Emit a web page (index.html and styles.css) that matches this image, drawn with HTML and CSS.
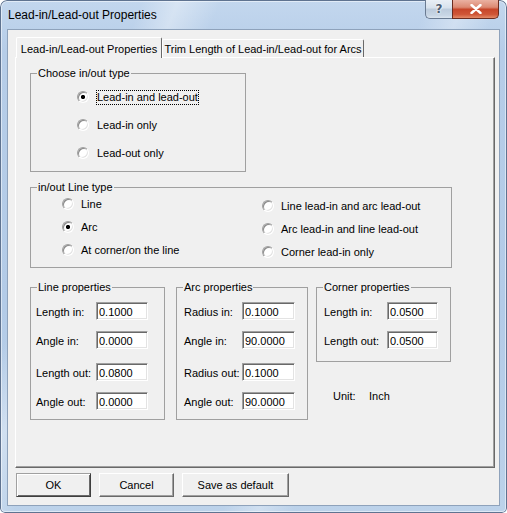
FILE: index.html
```html
<!DOCTYPE html>
<html>
<head>
<meta charset="utf-8">
<title>Lead-in/Lead-out Properties</title>
<link rel="stylesheet" href="styles.css">
</head>
<body>
<div class="window">
  <div class="titlebar">
    <span class="title">Lead-in/Lead-out Properties</span>
    <div class="caption-btns">
      <div class="cap-help">?</div>
      <div class="cap-close">
        <svg width="12" height="10" viewBox="0 0 12 10"><path d="M1.5 1 L10.5 9 M10.5 1 L1.5 9" stroke="#fff" stroke-width="2.4" stroke-linecap="round"/></svg>
      </div>
    </div>
  </div>
  <div class="client">
    <div class="tabs">
      <div class="tab active">Lead-in/Lead-out Properties</div>
      <div class="tab second">Trim Length of Lead-in/Lead-out for Arcs</div>
    </div>
    <div class="panel">
      <fieldset class="group g-type">
        <legend>Choose in/out type</legend>
        <div class="radio-list">
          <label class="radio"><span class="rb checked"></span><span class="rt focus">Lead-in and lead-out</span></label>
          <label class="radio"><span class="rb"></span><span class="rt">Lead-in only</span></label>
          <label class="radio"><span class="rb"></span><span class="rt">Lead-out only</span></label>
        </div>
      </fieldset>
      <fieldset class="group g-line">
        <legend>in/out Line type</legend>
        <div class="cols">
          <div class="col c1">
            <label class="radio"><span class="rb"></span><span class="rt">Line</span></label>
            <label class="radio"><span class="rb checked"></span><span class="rt">Arc</span></label>
            <label class="radio"><span class="rb"></span><span class="rt">At corner/on the line</span></label>
          </div>
          <div class="col c2">
            <label class="radio"><span class="rb"></span><span class="rt">Line lead-in and arc lead-out</span></label>
            <label class="radio"><span class="rb"></span><span class="rt">Arc lead-in and line lead-out</span></label>
            <label class="radio"><span class="rb"></span><span class="rt">Corner lead-in only</span></label>
          </div>
        </div>
      </fieldset>
      <div class="props">
        <fieldset class="group pg line-props">
          <legend>Line properties</legend>
          <div class="prow"><span class="pl">Length in:</span><input class="edit" type="text" value="0.1000"></div>
          <div class="prow"><span class="pl">Angle in:</span><input class="edit" type="text" value="0.0000"></div>
          <div class="prow wide"><span class="pl">Length out:</span><input class="edit" type="text" value="0.0800"></div>
          <div class="prow"><span class="pl">Angle out:</span><input class="edit" type="text" value="0.0000"></div>
        </fieldset>
        <fieldset class="group pg arc-props">
          <legend>Arc properties</legend>
          <div class="prow"><span class="pl">Radius in:</span><input class="edit" type="text" value="0.1000"></div>
          <div class="prow"><span class="pl">Angle in:</span><input class="edit" type="text" value="90.0000"></div>
          <div class="prow wide"><span class="pl">Radius out:</span><input class="edit" type="text" value="0.1000"></div>
          <div class="prow"><span class="pl">Angle out:</span><input class="edit" type="text" value="90.0000"></div>
        </fieldset>
        <div class="corner-col">
          <fieldset class="group pg corner-props">
            <legend>Corner properties</legend>
            <div class="prow"><span class="pl">Length in:</span><input class="edit" type="text" value="0.0500"></div>
            <div class="prow"><span class="pl">Length out:</span><input class="edit" type="text" value="0.0500"></div>
          </fieldset>
          <div class="unit"><span class="unit-l">Unit:</span><span>Inch</span></div>
        </div>
      </div>
    </div>
    <div class="buttons">
      <button class="btn default">OK</button>
      <button class="btn">Cancel</button>
      <button class="btn save">Save as default</button>
    </div>
  </div>
</div>
</body>
</html>
```

FILE: styles.css
```css
* { box-sizing: border-box; }
html, body { margin: 0; padding: 0; }
body {
  width: 507px;
  height: 513px;
  overflow: hidden;
  background: #ffffff;
  font-family: "Liberation Sans", Arial, sans-serif;
  font-size: 11px;
  color: #000;
}
.window {
  width: 507px;
  height: 513px;
  border-radius: 7px 7px 5px 5px;
  overflow: hidden;
  background:
    linear-gradient(112deg, rgba(255,255,255,0) 20%, rgba(255,255,255,0.35) 25%, rgba(255,255,255,0) 31%, rgba(255,255,255,0) 60%, rgba(255,255,255,0.3) 65%, rgba(255,255,255,0) 70%),
    linear-gradient(180deg, #c3d7ee 0%, #b6cde8 10%, #b3cbe7 60%, #bcd2ea 100%);
  box-shadow: inset 0 0 0 1px #5f7390, inset 0 0 0 2px rgba(255,255,255,0.5);
  display: flex;
  flex-direction: column;
}
.titlebar {
  height: 30px;
  display: flex;
  justify-content: space-between;
  align-items: flex-start;
  padding: 0 8px 0 8px;
}
.title {
  font-size: 12px;
  line-height: 14px;
  padding-top: 8px;
  color: #000;
}
.caption-btns {
  display: flex;
  height: 19px;
}
.cap-help {
  width: 27px;
  height: 19px;
  border: 1px solid #6a7b92;
  border-top: none;
  border-right: none;
  border-radius: 0 0 0 5px;
  background: linear-gradient(180deg, #e9eff6 0%, #d7e1ec 45%, #bccbdc 50%, #c8d6e5 85%, #dbe5ef 100%);
  display: flex;
  align-items: center;
  justify-content: center;
  font-family: "DejaVu Sans", sans-serif;
  font-weight: bold;
  font-size: 12px;
  color: #4d5d72;
  text-shadow: 0 0 2px #fff, 0 0 2px #fff;
}
.cap-close {
  width: 47px;
  height: 19px;
  border: 1px solid #6b2c1f;
  border-top: none;
  border-radius: 0 0 5px 0;
  background: linear-gradient(180deg, #eab1a2 0%, #dc8a73 40%, #c7462a 52%, #cf5637 80%, #e48a68 100%);
  display: flex;
  align-items: center;
  justify-content: center;
}
.client {
  margin: 0 8px;
  height: 475px;
  background: #f0f0f0;
  box-shadow: 0 0 0 1px #8ea2bb;
  padding: 7px 0 0 7px;
}
.tabs {
  display: flex;
  align-items: flex-end;
  margin-left: 1px;
  height: 21px;
  margin-bottom: -1px;
  position: relative;
  z-index: 1;
}
.tab {
  border: 1px solid;
  border-color: #fff #696969 transparent #fff;
  border-bottom: none;
  background: #f0f0f0;
  line-height: 13px;
  white-space: nowrap;
  text-align: center;
}
.tab.active {
  width: 146px;
  height: 21px;
  padding-top: 5px;
  border-radius: 2px 2px 0 0;
}
.tab.second {
  width: 202px;
  height: 18px;
  padding-top: 3px;
  margin-bottom: 1px;
  border-radius: 2px 2px 0 0;
}
.panel {
  width: 480px;
  height: 411px;
  border: 1px solid;
  border-color: #fff #696969 #696969 #fff;
  box-shadow: inset -1px -1px 0 #a0a0a0;
  padding-left: 14px;
}
.group {
  margin: 0;
  padding: 0;
  min-width: 0;
  border: 1px solid #a0a0a0;
}
.group legend {
  margin-left: 6px;
  padding: 0 1px;
  line-height: 13px;
  font-size: 11px;
}
.g-type {
  margin-top: 9px;
  width: 216px;
  height: 105px;
  padding-top: 9px;
}
.radio-list {
  display: flex;
  flex-direction: column;
  gap: 12px;
  padding-left: 46px;
}
.radio {
  display: flex;
  align-items: center;
  height: 16px;
  gap: 7px;
  white-space: nowrap;
}
.rb {
  width: 12px;
  height: 12px;
  flex: none;
  border-radius: 50%;
  border: 1px solid;
  border-color: #a0a0a0 #ffffff #ffffff #a0a0a0;
  box-shadow: inset 1px 1px 0 #8a8a8a, inset -1px -1px 0 #e3e3e3;
  background: #ffffff;
}
.rb.checked {
  background: radial-gradient(circle at 50% 50%, #000 0, #000 1.8px, #fff 2.4px);
}
.rt {
  border: 1px solid transparent;
  line-height: 13px;
}
.rt.focus {
  border: 1px dotted #000;
}
.g-line {
  margin-top: 9px;
  width: 422px;
  height: 87px;
  padding-top: 2px;
}
.cols {
  display: flex;
  padding-left: 31px;
}
.col {
  display: flex;
  flex-direction: column;
  gap: 7px;
}
.c1 {
  width: 200px;
}
.c1 .radio, .c2 .radio { gap: 6px; }
.c2 {
  padding-top: 2px;
}
.props {
  margin-top: 13px;
  display: flex;
  align-items: flex-start;
}
.pg {
  padding-top: 8px;
}
.line-props {
  width: 135px;
  height: 139px;
}
.line-props .prow { margin-left: 5px; }
.arc-props {
  width: 132px;
  height: 139px;
  margin-left: 11px;
}
.arc-props .prow { margin-left: 7px; }
.corner-col {
  margin-left: 8px;
  display: flex;
  flex-direction: column;
}
.corner-props {
  width: 135px;
  height: 81px;
}
.corner-props .prow { margin-left: 7px; }
.prow {
  display: flex;
  align-items: center;
  height: 18px;
}
.prow + .prow { margin-top: 11px; }
.prow.wide { margin-top: 14px; }
.pl {
  padding-top: 3px;
  line-height: 13px;
  white-space: nowrap;
}
.line-props .pl { width: 60px; }
.arc-props .pl { width: 58px; }
.corner-props .pl { width: 63px; }
.edit {
  height: 18px;
  margin: 0;
  padding: 1px 0 0 2px;
  font-family: "Liberation Sans", Arial, sans-serif;
  font-size: 11px;
  color: #000;
  background: #fff;
  border: 1px solid;
  border-color: #a0a0a0 #ffffff #ffffff #a0a0a0;
  box-shadow: inset 1px 1px 0 #696969, inset -1px -1px 0 #e3e3e3;
  outline: none;
}
.line-props .edit { width: 52px; }
.arc-props .edit { width: 53px; }
.corner-props .edit { width: 51px; }
.unit {
  margin-top: 28px;
  margin-left: 17px;
  display: flex;
  line-height: 13px;
}
.unit-l { width: 36px; }
.buttons {
  margin-top: 5px;
  margin-left: 1px;
  display: flex;
  gap: 8px;
}
.btn {
  width: 75px;
  height: 24px;
  margin: 0;
  padding: 0;
  font-family: "Liberation Sans", Arial, sans-serif;
  font-size: 11px;
  color: #000;
  background: #f0f0f0;
  border: 1px solid;
  border-color: #ffffff #696969 #696969 #ffffff;
  box-shadow: inset -1px -1px 0 #a0a0a0;
}
.btn.default {
  border-color: #a0a0a0 #3f3f3f #3f3f3f #a0a0a0;
  box-shadow: inset 1px 1px 0 #ffffff, inset -1px -1px 0 #696969;
}
.btn.save { width: 107px; }
```
